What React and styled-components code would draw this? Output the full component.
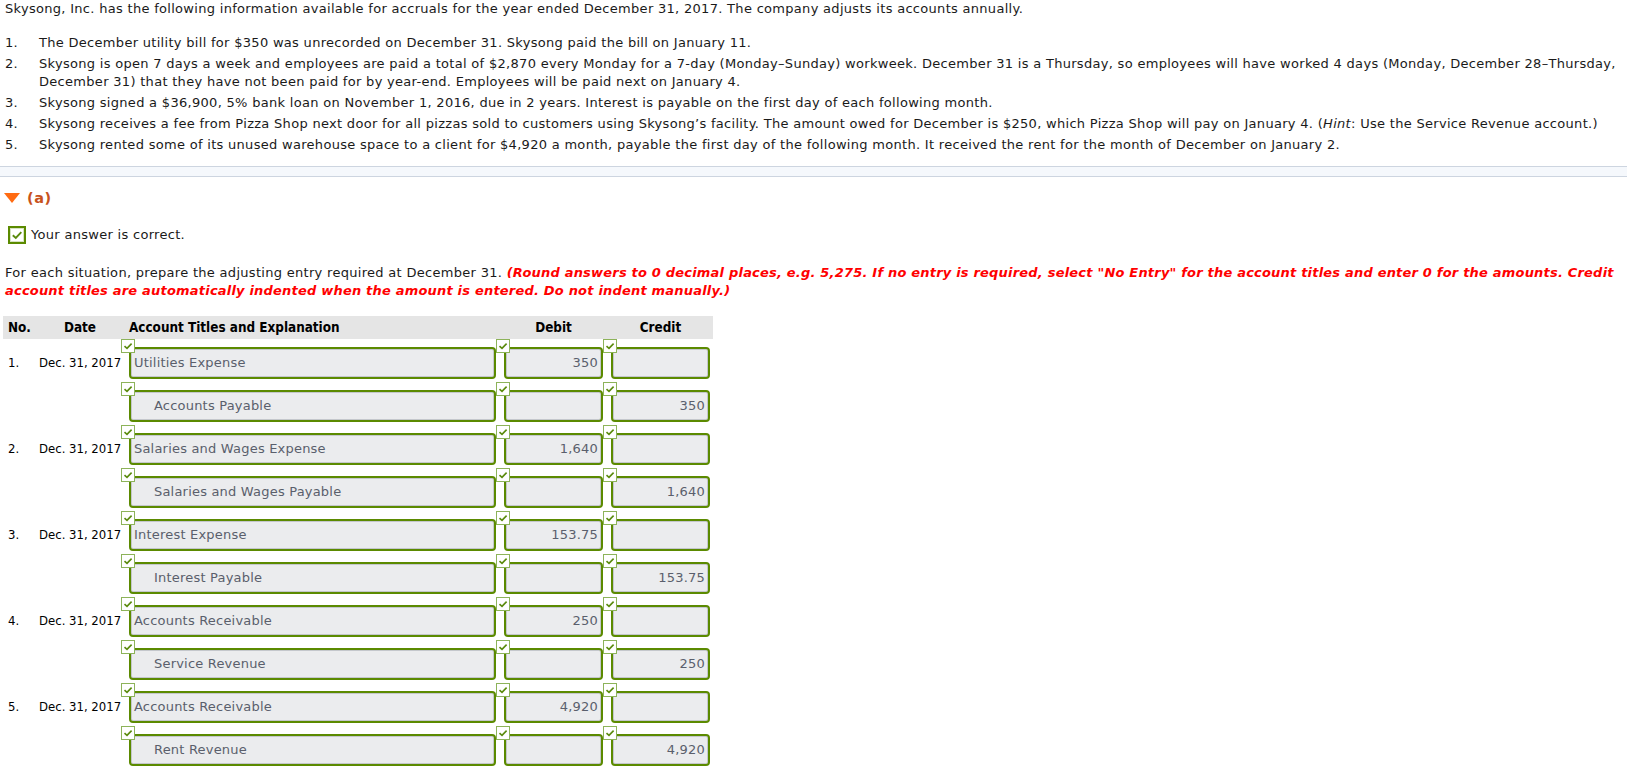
import React from 'react';
import styled, { createGlobalStyle } from 'styled-components';

const GlobalStyle = createGlobalStyle`
  html, body {
    margin: 0;
    padding: 0;
    background: #fff;
  }
  body {
    font-family: "DejaVu Sans", Verdana, sans-serif;
    font-size: 13px;
    letter-spacing: 0.3px;
    color: #1a1a1a;
  }
`;

const situations = [
  'The December utility bill for $350 was unrecorded on December 31. Skysong paid the bill on January 11.',
  'Skysong is open 7 days a week and employees are paid a total of $2,870 every Monday for a 7-day (Monday–Sunday) workweek. December 31 is a Thursday, so employees will have worked 4 days (Monday, December 28–Thursday, December 31) that they have not been paid for by year-end. Employees will be paid next on January 4.',
  'Skysong signed a $36,900, 5% bank loan on November 1, 2016, due in 2 years. Interest is payable on the first day of each following month.',
  'hint',
  'Skysong rented some of its unused warehouse space to a client for $4,920 a month, payable the first day of the following month. It received the rent for the month of December on January 2.',
];

const entries = [
  { no: '1.', date: 'Dec. 31, 2017', account: 'Utilities Expense', debit: '350' },
  { account: 'Accounts Payable', credit: '350' },
  { no: '2.', date: 'Dec. 31, 2017', account: 'Salaries and Wages Expense', debit: '1,640' },
  { account: 'Salaries and Wages Payable', credit: '1,640' },
  { no: '3.', date: 'Dec. 31, 2017', account: 'Interest Expense', debit: '153.75' },
  { account: 'Interest Payable', credit: '153.75' },
  { no: '4.', date: 'Dec. 31, 2017', account: 'Accounts Receivable', debit: '250' },
  { account: 'Service Revenue', credit: '250' },
  { no: '5.', date: 'Dec. 31, 2017', account: 'Accounts Receivable', debit: '4,920' },
  { account: 'Rent Revenue', credit: '4,920' },
];

const Check = ({ size = 10 }) => (
  <svg width={size} height={size} viewBox="0 0 10 10">
    <polyline points="1.5,5.2 4,7.4 8.6,2.6" fill="none" stroke="#5a8a0c" strokeWidth="1.6" />
  </svg>
);

const App = () => (
  <Page>
    <GlobalStyle />
    <Intro>
      Skysong, Inc. has the following information available for accruals for the year ended December 31, 2017. The company adjusts its accounts annually.
    </Intro>
    <List>
      {situations.map((text, i) => (
        <Item key={i}>
          <span>{i + 1}.</span>
          <span>
            {text === 'hint' ? (
              <>
                Skysong receives a fee from Pizza Shop next door for all pizzas sold to customers using Skysong’s facility. The amount owed for December is $250, which Pizza Shop will pay on January 4. (<em>Hint</em>: Use the Service Revenue account.)
              </>
            ) : text}
          </span>
        </Item>
      ))}
    </List>

    <Divider />

    <PartHeader>
      <Triangle />
      <PartLabel>(a)</PartLabel>
    </PartHeader>

    <Correct>
      <BigBox><Check size={12} /></BigBox>
      Your answer is correct.
    </Correct>

    <Instructions>
      For each situation, prepare the adjusting entry required at December 31.{' '}
      <Warn>
        (Round answers to 0 decimal places, e.g. 5,275. If no entry is required, select "No Entry" for the account titles and enter 0 for the amounts. Credit account titles are automatically indented when the amount is entered. Do not indent manually.)
      </Warn>
    </Instructions>

    <Journal>
      <HeadRow>
        <HeadCell>No.</HeadCell>
        <HeadCell $align="center">Date</HeadCell>
        <HeadCell $pad="8px">Account Titles and Explanation</HeadCell>
        <HeadCell $align="center" $pad="8px">Debit</HeadCell>
        <HeadCell $align="center" $pad="8px">Credit</HeadCell>
      </HeadRow>
      {entries.map((e, i) => (
        <Row key={i}>
          <RowText>{e.no}</RowText>
          <RowText $flush>{e.date}</RowText>
          <Field>
            <Mark><Check /></Mark>
            <Input $indent={!!e.credit}>{e.account}</Input>
          </Field>
          <Field>
            <Mark><Check /></Mark>
            <Input $right>{e.debit}</Input>
          </Field>
          <Field>
            <Mark><Check /></Mark>
            <Input $right>{e.credit}</Input>
          </Field>
        </Row>
      ))}
    </Journal>
  </Page>
);

export default App;

const Page = styled.div`
  padding: 0 0 20px;
`;

const Intro = styled.p`
  margin: 0;
  padding: 0 5px;
  line-height: 17px;
`;

const List = styled.ol`
  list-style: none;
  margin: 17px 0 0;
  padding: 0 5px;
`;

const Item = styled.li`
  display: grid;
  grid-template-columns: 34px 1fr;
  line-height: 18px;
  margin-bottom: 3px;
`;

const Divider = styled.div`
  margin-top: 12px;
  height: 9px;
  border-top: 1px solid #cdd5e0;
  border-bottom: 1px solid #cdd5e0;
  background: #f5f8fc;
`;

const PartHeader = styled.div`
  display: flex;
  align-items: center;
  gap: 7px;
  padding: 11px 4px 0;
  height: 20px;
`;

const Triangle = styled.span`
  width: 0;
  height: 0;
  border-left: 8.5px solid transparent;
  border-right: 8.5px solid transparent;
  border-top: 10px solid #ff6b12;
`;

const PartLabel = styled.span`
  font-weight: bold;
  font-size: 14.5px;
  letter-spacing: 0.5px;
  color: #c8521c;
`;

const Correct = styled.div`
  display: flex;
  align-items: center;
  gap: 5px;
  margin-top: 18px;
  padding-left: 8px;
  line-height: 18px;
`;

const BigBox = styled.span`
  display: inline-flex;
  align-items: center;
  justify-content: center;
  box-sizing: border-box;
  width: 18px;
  height: 18px;
  border: 2px solid #5b8a00;
  background: #fff;
  box-shadow: inset 0 0 0 1px #d6e3c0;
`;

const Instructions = styled.p`
  margin: 20px 0 0;
  padding: 0 5px;
  line-height: 18px;
`;

const Warn = styled.span`
  color: #f00;
  font-weight: bold;
  font-style: italic;
  letter-spacing: 0.2px;
`;

const columns = '36px 82px 375px 107px 107px';

const Journal = styled.div`
  margin: 16px 0 0 3px;
  width: 710px;
  font-family: "DejaVu Sans Condensed", Tahoma, sans-serif;
  letter-spacing: 0;
`;

const HeadRow = styled.div`
  display: grid;
  grid-template-columns: ${columns};
  align-items: center;
  height: 23px;
  padding-right: 3px;
  background: #e5e5e5;
`;

const HeadCell = styled.div`
  font-weight: bold;
  font-size: 13.4px;
  color: #000;
  white-space: nowrap;
  padding-left: ${(p) => p.$pad || (p.$align ? '0' : '5px')};
  text-align: ${(p) => p.$align || 'left'};
`;

const Row = styled.div`
  display: grid;
  grid-template-columns: ${columns};
  align-items: end;
  height: 43px;
`;

const RowText = styled.div`
  font-size: 13px;
  color: #000;
  height: 35px;
  line-height: 32px;
  white-space: nowrap;
  padding-left: ${(p) => (p.$flush ? '0' : '5px')};
`;

const Field = styled.div`
  position: relative;
  padding: 8px 0 3px 8px;
`;

const Mark = styled.span`
  position: absolute;
  left: 0;
  top: 0;
  z-index: 1;
  box-sizing: border-box;
  width: 14px;
  height: 14px;
  display: flex;
  align-items: center;
  justify-content: center;
  border: 1px solid #8db35a;
  background: #fff;
`;

const Input = styled.div`
  box-sizing: border-box;
  height: 32px;
  border: 2px solid #5b8a00;
  border-radius: 4px;
  background: #ebecee;
  box-shadow: inset 0 0 0 1px #c4c7cc;
  font-family: "DejaVu Sans", Verdana, sans-serif;
  font-size: 13px;
  letter-spacing: 0.2px;
  color: #5a5f6c;
  line-height: 28px;
  padding: 0 ${(p) => (p.$right ? '3px' : '2px')} 0 ${(p) => (p.$indent ? '23px' : '3px')};
  text-align: ${(p) => (p.$right ? 'right' : 'left')};
  white-space: nowrap;
  overflow: hidden;
`;
